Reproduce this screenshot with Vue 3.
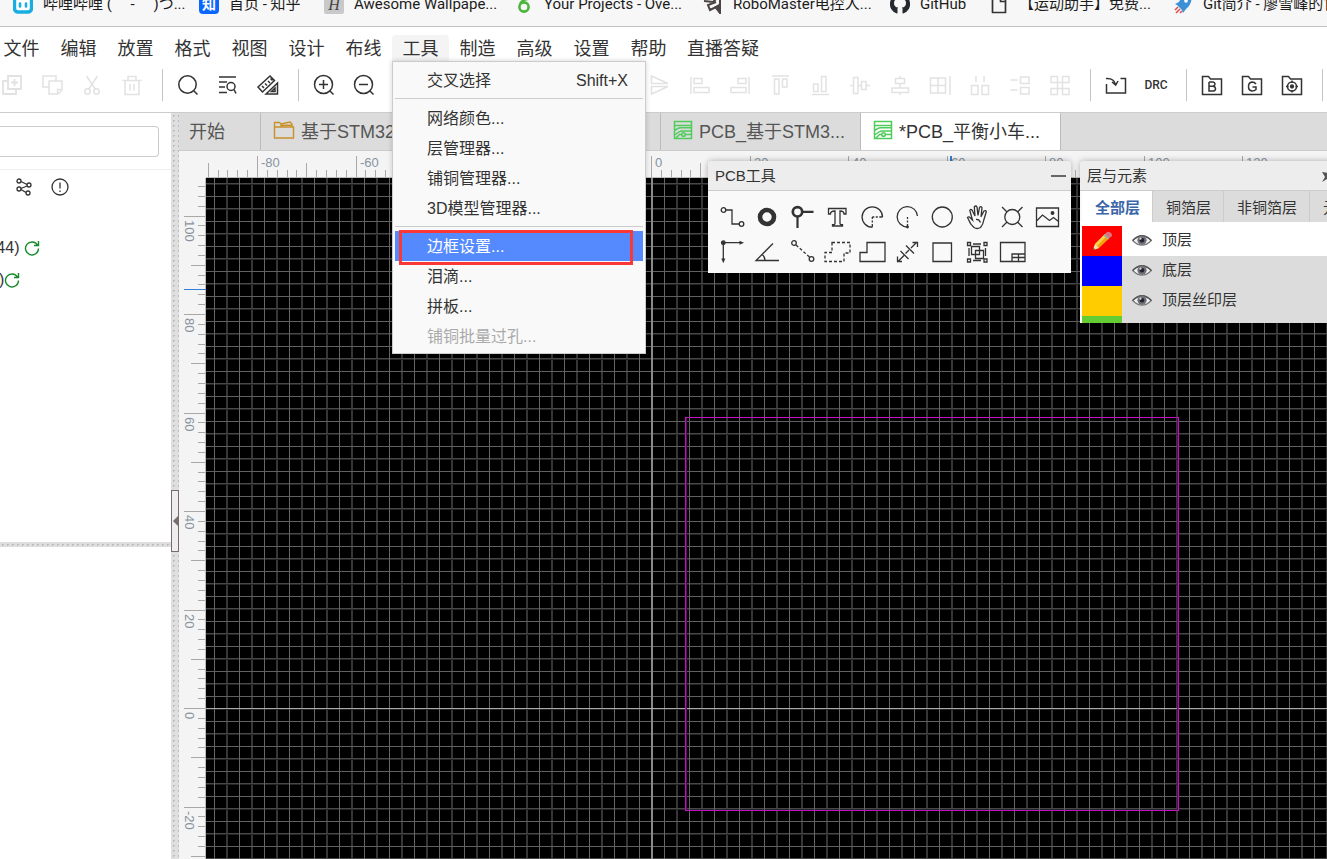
<script setup>
const bookmarks = [
  { text: '哔哩哔哩 ( ゜- ゜)つ...', icon: '<rect x="1.5" y="3" width="17" height="15" rx="3.5" fill="#fff" stroke="#19aee0" stroke-width="3.4"/><path d="M7 9.5v3M13 9.5v3" stroke="#19aee0" stroke-width="2.6" stroke-linecap="round"/>' },
  { text: '首页 - 知乎', icon: '<rect width="20" height="20" rx="4" fill="#0a66ff"/><text x="10" y="15" font-size="14" font-weight="700" text-anchor="middle" fill="#fff">知</text>' },
  { text: 'Awesome Wallpape...', icon: '<rect width="20" height="20" rx="2" fill="#c9c9c9"/><text x="10" y="16" font-size="16" font-style="italic" font-family="Liberation Serif" text-anchor="middle" fill="#444">H</text>' },
  { text: 'Your Projects - Ove...', icon: '<circle cx="10" cy="13" r="4.6" fill="none" stroke="#4cb53c" stroke-width="2.6"/><path d="M6 10Q9 5 14 5" fill="none" stroke="#4cb53c" stroke-width="2.4"/>' },
  { text: 'RoboMaster电控人...', icon: '<path d="M1 7l9 1 7-7v18l-4-6-6 3-2-5 8-3" fill="none" stroke="#4a4444" stroke-width="2"/><path d="M11 13l5-3v9z" fill="#4a4444"/>' },
  { text: 'GitHub', icon: '<path d="M10 0a10 10 0 0 0-3.2 19.5c.5.1.7-.2.7-.5v-3c-.3-1 0-1.8.7-2.4C5.5 13.3 4 12 4 9c0-1.2.4-2.2 1.1-2.9L5 3.3l3 1.2h4l3-1.2-.1 2.8C15.6 6.8 16 7.8 16 9c0 3-1.5 4.3-4.2 4.6.7.6 1 1.4.7 2.4v3c0 .3.2.6.7.5A10 10 0 0 0 10 0z" fill="#24292f"/>' },
  { text: '【运动助手】免费...', icon: '<path d="M3.5 1.5h9l4 4V18.5h-13zM11.5 1.5v6h5" fill="none" stroke="#333" stroke-width="1.7" stroke-linejoin="round"/>' },
  { text: 'Git简介 - 廖雪峰的官方网站', icon: '<path d="M19 0Q9 1 6 8L2 10l2 1 5 5 1 3 3-4Q19 11 19 0z" fill="#3d8fd6"/><circle cx="13" cy="7" r="1.8" fill="#fff"/><path d="M2 16l3-3M3 19l4-4M7 19l2-2" stroke="#e2474b" stroke-width="1.5"/>' }
]

const menus = ['文件', '编辑', '放置', '格式', '视图', '设计', '布线', '工具', '制造', '高级', '设置', '帮助', '直播答疑']

const folder = '<path d="M2.5 21.5V3.5h6l2 2.5h11v15.5z"/>'
const toolGroups = [
  { off: true, icons: [
    ['复制加', '<path d="M8 3h13v13H8zM8 8H3v13h13v-5M14.5 6v7M11 9.5h7" stroke-width="1.8"/>'],
    ['副本', '<path d="M16 8V3H3v11h6M9 8h13v9l-4 4H9zM17.5 21v-4.5H22"/>'],
    ['剪切', '<path d="M6.5 3l9 13.5M17.5 3l-9 13.5"/><circle cx="7.5" cy="18.5" r="2.7"/><circle cx="16.5" cy="18.5" r="2.7"/>'],
    ['删除', '<path d="M2.5 7.5h19M8 7V3.5h8V7M5 8v13.5h14V8M10 11v6.5M14 11v6.5"/>']
  ] },
  { icons: [
    ['搜索', '<circle cx="11.5" cy="11.5" r="8.7"/><path d="M18 18l3.5 3.5"/>'],
    ['查找', '<path d="M3 4h17M3 9h8M3 14h6M3 19.5h8"/><circle cx="15" cy="13.5" r="4"/><path d="M18 16.5l2 4"/>'],
    ['测量', '<path d="M2 14L14 3l4.5 4.5L6.5 19zM6 13l2 2M9 10.5l2 2M12 8l2 2M14.5 5.5l2 2"/><path d="M10 21L21.5 10v11zM15.5 18.5h3.5v-3.5z"/>']
  ] },
  { icons: [
    ['放大', '<circle cx="11.5" cy="11.5" r="9"/><path d="M18 18l3.5 3.5M11.5 7v9M7 11.5h9"/>'],
    ['缩小', '<circle cx="11.5" cy="11.5" r="9"/><path d="M18 18l3.5 3.5M7 11.5h9"/>']
  ] },
  { off: true, wide: true, icons: [
    ['翻转', '<path d="M3.5 3v7.5H20zM3.5 21v-7.5H20z"/>'],
    ['左对齐', '<path d="M3 4v17M6 5.5h8v5H6zM6 14.5h15v5H6z"/>'],
    ['右对齐', '<path d="M21 4v17M10 5.5h8v5h-8zM3 14.5h15v5H3z"/>'],
    ['顶对齐', '<path d="M4 3h17M6.5 6h4.5v15H6.5zM14.5 6h4.5v8h-4.5z"/>'],
    ['底对齐', '<path d="M4 21.5h17M5.5 11h4.5v7.5H5.5zM13.5 3.5H18v15h-4.5z"/>'],
    ['水平居中', '<path d="M2 12.5h3M10 12.5h3.5M18 12.5h4M5.5 4.5H10v16H5.5zM13.5 8.5H18v8h-4.5z"/>'],
    ['垂直居中', '<path d="M12 3v2.5M12 10.5V15M12 19.5V22M7.5 5.5h9v5h-9zM4 15h16.5v4.5H4z"/>'],
    ['网格对齐', '<path d="M22 3v19M2.5 5h15v15h-15zM10 5v15M2.5 12.5h15"/>'],
    ['水平分布', '<path d="M8 3v6M16 3v6M3.5 12.5h6.5v9H3.5zM14 12.5h6.5v9H14z"/>'],
    ['垂直分布', '<path d="M2.5 7h7M2.5 17h7M12.5 4H21v6.5h-8.5zM12.5 14.5H21V21h-8.5z"/>'],
    ['阵列', '<path d="M3 3.500h6.5v6H3zM14.500 3.500H21v6h-6.500zM3 15.500h6.500v6H3zM14.500 15.500H21v6h-6.500zM9.500 9.500v6M14.500 9.500v6M9.500 9.500h5M9.500 15.500h5"/>']
  ] },
  { icons: [
    ['导入', '<path d="M5 8.500M2.500 11v9h19V5.500h-5M2 5.500Q10 5 11.500 11.500M8 9l3.700 3 2.300-4"/>'],
    ['设计规则检查', '<text x="12" y="16" font-size="12" font-weight="500" text-anchor="middle" stroke="none" fill="#333" font-family="Roboto">DRC</text>']
  ] },
  { icons: [
    ['物料清单', folder + '<path d="M9 9h4q2 .3 2 2t-2 2.3H9M9 9v9h4.5q2-.3 2-2.300T13 13.300"/>'],
    ['制板文件', folder + '<path d="M16 11Q14.500 9 12 9q-3.500.5-3.500 4.500T12 18q2.500 0 4-1.500V14h-3.500"/>'],
    ['坐标', folder + '<circle cx="12" cy="13.5" r="4.5"/><circle cx="12" cy="13.5" r="1.4" fill="#333"/><path d="M12 7.500V10M12 17v2.500M6 13.500h2.500M15.500 13.500H18"/>']
  ] },
  { icons: [] }
]

const menuItems = [
  { text: '交叉选择', key: 'Shift+X' },
  { line: true },
  { text: '网络颜色...' },
  { text: '层管理器...' },
  { text: '铺铜管理器...' },
  { text: '3D模型管理器...' },
  { line: true },
  { text: '边框设置...', active: true },
  { text: '泪滴...' },
  { text: '拼板...' },
  { text: '铺铜批量过孔...', off: true }
]

const tabs = [
  { text: '开始', kind: 'home' },
  { text: '基于STM32...', kind: 'folder' },
  { text: '', kind: 'sheet' },
  { text: 'PCB_基于STM3...', kind: 'pcb' },
  { text: '*PCB_平衡小车...', kind: 'pcb', active: true }
]

const pcbTools = [
  ['导线', '<circle cx="6.5" cy="8" r="2.3"/><path d="M9 8h6v14h7"/><circle cx="24.5" cy="22" r="2.3"/>'],
  ['焊盘', '<circle cx="15" cy="15" r="7" stroke-width="4.6"/>'],
  ['过孔', '<circle cx="10.5" cy="9.8" r="4.7" stroke-width="2.7"/><path d="M15.500 9.800H26.500M10.500 15v11" stroke-width="2.2"/>'],
  ['文本', '<path d="M6.500 6.500h17.500v5.500h-2q0-3-4-3v12.500q0 1.200 2.500 1.200V24H10.500v-1.300q2.500 0 2.500-1.200V9q-4.500 0-4.500 3h-2z"/>'],
  ['圆弧', '<path d="M25.500 15A10.200 10.200 0 1 0 15.300 25.200M23 15h2.500M15.300 23v2.200"/><path d="M15.300 15v8M15.300 15H23" stroke-dasharray="2 1.5"/>'],
  ['中心圆弧', '<path d="M25.500 14A10.200 10.200 0 1 0 15.300 25"/><path d="M15.500 15v9" stroke-dasharray="2 1.5"/><circle cx="15.5" cy="25" r=".8"/>'],
  ['圆', '<circle cx="15.3" cy="15" r="10"/>'],
  ['拖动', '<path d="M12 25.500Q8 22 7 18.500L5.500 15.500q1.500-1.500 3 .5l2 2L7.800 8.500q.7-2 2.300-.3L13 14 12.300 5q1.500-2 2.700 0l1 8.500 1.500-8q1.700-1.700 2.500.3l-1 9 3-5.800q1.800-1.200 2.300.7L21.800 18q-.6 4.500-3.300 7.500Q15 27.500 12 25.500z"/><path d="M14 17.500q3-.5 4.500 3"/>'],
  ['孔', '<circle cx="15.3" cy="15" r="7.5"/><path d="M5 5l5 5M25.500 5l-5 5M5 25l5-5M25.500 25l-5-5"/>'],
  ['图片', '<path d="M4.500 6h22v18.500h-22zM4.500 19l6-6 7 5.500 4-3 5 4"/><circle cx="20.5" cy="11" r="1.3" fill="#333"/>'],
  ['原点', '<path d="M6.300 5.700H24M6.300 5.700V23"/><circle cx="6.3" cy="5.7" r="1.800" fill="#333"/><path d="M22.500 3.700l4.500 2-4.500 2zM4.300 21.500l2 4.800 2-4.800z" fill="#333" stroke="none"/>'],
  ['角度', '<path d="M21 6.500L4 23.500h23M10 17.500q3 2 3 6"/>'],
  ['连线', '<circle cx="7" cy="6" r="2.3"/><circle cx="24.5" cy="22" r="2.3"/><path d="M9 8l13.500 12" stroke-dasharray="3 2"/>'],
  ['铺铜', '<path d="M10 5.500h18V16h-6v8.500H3v-9h7z" stroke-dasharray="3 2"/>'],
  ['实心填充', '<path d="M10 5.500h18v19H3v-9h7z"/>'],
  ['尺寸', '<path d="M6 24.500l6-6M19 11l6-6M20.500 5.500h5V10M5.500 19.500v5H10M8.500 14l8 8M14 8.500l8 8M13.500 16.500l3.500-3.500"/>'],
  ['矩形', '<path d="M6 6h18.500v18.500H6z"/>'],
  ['组合', '<path d="M5.500 5.500h3v3h-3zM22 5.500h3v3h-3zM5.500 22h3v3h-3zM22 22h3v3h-3zM9.500 9.500h8v8h-8zM13.500 13.500h8v8h-8zM11 7h8M11 23.500h8M7 11v8M23.500 11v8"/>'],
  ['面板', '<path d="M3.500 5.500h24.500v19H3.500zM15 24.500V17h13M15 20.500h13M21.500 17v7.500"/>']
]

const layerTabs = ['全部层', '铜箔层', '非铜箔层', '元素']
const layers = [
  { name: '顶层', cls: 'red', active: true },
  { name: '底层', cls: 'blue' },
  { name: '顶层丝印层', cls: 'yellow' },
  { name: '', cls: 'green' }
]

const STEP = 9.85
function ticks(origin, from, to, dir) {
  const list = []
  for (let i = from; i <= to; i++) {
    const major = i % 10 === 0
    list.push({
      pos: Math.round(origin + i * STEP),
      size: major ? 21 : i % 5 === 0 ? 14 : 7,
      label: major ? String(i * 2 * dir) : ''
    })
  }
  return list
}
const hTicks = ticks(446, -45, 160, 1)
const vTicks = ticks(530, -53, 90, -1)
</script>

<template>
  <div class="app">
    <nav class="bookmarks">
      <a v-for="b in bookmarks" :key="b.text" href="#" class="bookmark">
        <svg class="fav" viewBox="0 0 20 20" v-html="b.icon"></svg><span>{{ b.text }}</span>
      </a>
    </nav>

    <header class="top">
      <div class="menubar">
        <div v-for="m in menus" :key="m" class="menu-slot">
          <button class="menu" :class="{ open: m === '工具' }">{{ m }}</button>
          <div v-if="m === '工具'" class="dropdown">
            <template v-for="(it, i) in menuItems" :key="i">
              <hr v-if="it.line" class="rule" />
              <button v-else class="item" :class="{ active: it.active }" :disabled="it.off">
                <span>{{ it.text }}</span><span v-if="it.key">{{ it.key }}</span>
                <span v-if="it.active" class="marker"></span>
              </button>
            </template>
          </div>
        </div>
      </div>
      <div class="toolbar">
        <div v-for="(g, i) in toolGroups" :key="i" class="group" :class="{ off: g.off, wide: g.wide }">
          <button v-for="t in g.icons" :key="t[0]" class="tool" :aria-label="t[0]" :disabled="g.off">
            <svg viewBox="0 0 24 24" v-html="t[1]"></svg>
          </button>
        </div>
      </div>
    </header>

    <div class="body">
      <aside class="side">
        <div class="search"><input type="text" aria-label="搜索" /></div>
        <div class="side-tools">
          <button aria-label="网络"><svg viewBox="0 0 20 20"><circle cx="5" cy="4" r="2" /><circle cx="15" cy="8" r="2" /><circle cx="5" cy="12" r="2" /><circle cx="14" cy="16" r="2" /><path d="M7 4.500l6 3M13 9l-6 2.500M7 12.500l5 3" /></svg></button>
          <button aria-label="提示"><svg viewBox="0 0 20 20"><circle cx="10" cy="10" r="8" /><path d="M10 5.500v6M10 13.500v1.500" /></svg></button>
        </div>
        <div class="tree">
          <div class="node"><span>(44)</span><svg viewBox="0 0 16 16"><path d="M13.500 5A6.500 6.500 0 1 0 14.500 8.500M14.500 1v4.500H10" /></svg></div>
          <div class="node second"><span>)</span><svg viewBox="0 0 16 16"><path d="M13.500 5A6.500 6.500 0 1 0 14.500 8.500M14.500 1v4.500H10" /></svg></div>
        </div>
        <div class="hsplit"></div>
        <div class="side-bottom"></div>
      </aside>

      <div class="vsplit"><button class="collapse" aria-label="收起"></button></div>

      <main class="main">
        <div class="tabs">
          <button v-for="(t, i) in tabs" :key="i" class="tab" :class="[t.kind, { active: t.active }]">
            <svg v-if="t.kind === 'folder'" class="fold" viewBox="0 0 22 20"><path d="M1.500 18V2.500h5l1.500 1.500 9-2 2 2v3M1.500 7h19v11h-19zM8 4v1.500l11-.5" /></svg>
            <svg v-if="t.kind === 'pcb'" class="board" viewBox="0 0 20 20"><path d="M1.500 1.500h17v17h-17zM1.500 5.500h17M1.500 10.500l3-1.800q1.500-1 3-1h11M1.500 15l4.500-3q1.500-1 3-1h9.500M12 14.500h6.500M3 18l3.500-3.500h2" /><circle cx="10.500" cy="14.500" r="1.800" /></svg>
            <span>{{ t.text }}</span>
          </button>
        </div>

        <div class="workspace">
          <div class="corner"></div>
          <svg class="hruler">
            <g v-for="t in hTicks" :key="t.pos">
              <rect :x="t.pos - 1" :y="26 - t.size" width="1" :height="t.size" class="tick" />
              <text v-if="t.label" :x="t.pos + 3" y="16">{{ t.label }}</text>
            </g>
            <rect x="0" y="26" width="100%" height="1" class="edge" />
            <rect x="744" y="5" width="2" height="22" class="cursor" />
          </svg>
          <svg class="vruler">
            <g v-for="t in vTicks" :key="t.pos">
              <rect :x="26 - t.size" :y="t.pos" :width="t.size" height="1" class="tick" />
              <text v-if="t.label" :transform="`translate(6 ${t.pos + 4}) rotate(90)`">{{ t.label }}</text>
            </g>
            <rect x="26" y="0" width="1" height="100%" class="edge" />
            <rect x="5" y="111" width="22" height="1" class="cursor" />
          </svg>
          <svg class="canvas">
            <defs>
              <pattern id="grid" width="25" height="25" patternUnits="userSpaceOnUse">
                <rect x="20" width="2" height="25" fill="#363636" />
                <rect y="5" width="25" height="1" fill="#484848" />
                <rect y="6" width="25" height="1" fill="#242424" />
                <rect x="8" width="1" height="25" fill="#666" />
                <rect y="18" width="25" height="1" fill="#606060" />
              </pattern>
            </defs>
            <rect width="100%" height="100%" fill="#000" />
            <rect width="100%" height="100%" fill="url(#grid)" />
            <rect x="445" width="2" height="100%" fill="#8a8a8a" />
            <rect y="530" width="100%" height="1" fill="#aaa" />
            <path d="M480.5 239v394M971.5 239v394" stroke="#600860" />
            <rect x="479.5" y="239.5" width="493" height="393" class="outline" />
          </svg>
        </div>

        <section class="panel pcb-panel">
          <div class="panel-head"><span>PCB工具</span><button class="minimize" aria-label="最小化"></button></div>
          <div class="pcb-grid">
            <button v-for="t in pcbTools" :key="t[0]" :aria-label="t[0]"><svg viewBox="0 0 30 30" v-html="t[1]"></svg></button>
          </div>
        </section>

        <section class="panel layer-panel">
          <div class="panel-head">
            <span>层与元素</span>
            <button class="pin" aria-label="固定"><svg viewBox="0 0 14 14"><path d="M1 3l6 1 4-3 2 5-3 3 0 4-4-3-5 3 3-5z" /></svg></button>
          </div>
          <div class="layer-tabs">
            <button v-for="(t, i) in layerTabs" :key="t" :class="{ active: i === 0 }">{{ t }}</button>
          </div>
          <div class="layer-list">
            <div v-for="l in layers" :key="l.cls" class="layer" :class="{ active: l.active, cut: !l.name }">
              <button class="swatch" :class="l.cls" :aria-label="l.name || '底层丝印层'">
                <svg v-if="l.active" viewBox="0 0 20 20"><path d="M1 19l2-6L13 3l4.500 4L7 17z" fill="#f5a50c" /><path d="M3 13L13 3l2 1.800L5 15z" fill="#ffd24a" /><path d="M1 19l2-6 4 4z" fill="#f6deb0" /><path d="M1 19l.7-2 1.300 1.300z" fill="#222" /><path d="M11.500 4.500L13 3l4.500 4L16 8.700z" fill="#9aa" /><path d="M13 3l2-2q2-1 4 1t.5 3.500l-2 1.500z" fill="#e0707a" /></svg>
              </button>
              <svg v-if="l.name" class="eye" viewBox="0 0 20 14"><path d="M.7 6.500Q10-3 19.300 6.500 10 16 .7 6.500z" fill="#f1f1f1" stroke="#777" stroke-width="1.2" /><path d="M.7 6.500Q10-3 19.300 6.500" fill="none" stroke="#555" stroke-width="1.5" /><circle cx="10" cy="6.3" r="4.6" fill="#707078" /><circle cx="10" cy="6.3" r="2.3" fill="#222233" /><circle cx="8.5" cy="4.7" r="1.1" fill="#ddd" /></svg>
              <span>{{ l.name }}</span>
            </div>
          </div>
        </section>
      </main>
    </div>
  </div>
</template>

<style>
html, body { margin: 0; overflow: hidden; }
</style>

<style scoped>
.app {
  display: flex;
  flex-direction: column;
  height: 100vh;
  overflow: hidden;
  background: #fff;
  color: #333;
  font-family: "Liberation Sans", "Noto Sans CJK SC", sans-serif;
  font-size: 16px;
}
button {
  border: 0;
  padding: 0;
  margin: 0;
  background: none;
  color: inherit;
  font: inherit;
}
svg { display: block; flex: none; }

.bookmarks {
  display: grid;
  grid-template-columns: 186px 125px 190px 189px 187px 99px 184px 1fr;
  align-content: end;
  height: 26px;
  flex: none;
  padding-left: 13px;
  overflow: hidden;
  background: #f7f7f7;
  border-bottom: 1px solid #c2c2c2;
  font-family: Roboto, "Noto Sans CJK SC", sans-serif;
  font-size: 15px;
}
.bookmark {
  display: flex;
  align-items: center;
  gap: 10px;
  height: 24px;
  margin-bottom: 10px;
  line-height: 24px;
  color: #1c1c1c;
  text-decoration: none;
  white-space: nowrap;
}
.fav { width: 20px; height: 20px; }

.top { flex: none; border-bottom: 1px solid #ccc; }
.menubar { display: flex; padding-top: 8px; margin-left: -7px; }
.menu-slot { position: relative; }
.menu {
  display: block;
  min-width: 57px;
  height: 26px;
  padding: 0 10px;
  border-radius: 4px 4px 0 0;
  font-size: 18px;
  line-height: 28px;
  white-space: nowrap;
}
.menu.open { background: #f4f4f4; }
.dropdown {
  position: absolute;
  z-index: 20;
  top: 26px;
  left: 0;
  box-sizing: border-box;
  width: 254px;
  padding: 3px 2px 2px;
  background: #f9f9f9;
  border: 1px solid #ccc;
  box-shadow: 0 0 5px rgba(0, 0, 0, 0.18);
}
.rule { height: 1px; margin: 3px 0 4px; border: 0; background: #ccc; }
.item {
  position: relative;
  display: flex;
  justify-content: space-between;
  width: 100%;
  height: 30px;
  padding: 0 15px 0 32px;
  line-height: 32px;
  white-space: nowrap;
}
.item.active { background: #558aff; color: #fff; }
.item:disabled { color: #aaa; }
.marker {
  position: absolute;
  z-index: 1;
  top: -1px;
  left: 4px;
  right: 10px;
  height: 29px;
  border: 3px solid #fb3838;
}

.toolbar {
  display: flex;
  align-items: center;
  box-sizing: border-box;
  height: 51px;
  margin-left: -8px;
  padding-bottom: 4px;
}
.group { display: flex; align-items: center; flex: none; }
.group + .group::before {
  content: "";
  width: 1px;
  height: 32px;
  margin: 0 5px 0 10px;
  background: #c4c4c4;
}
.group.wide::before { margin-right: 245px; }
.tool { display: grid; place-items: center; width: 40px; height: 32px; }
.tool svg {
  width: 24px;
  height: 24px;
  fill: none;
  stroke: #333;
  stroke-width: 1.5;
}
.off .tool svg { stroke: #e2e2e2; }

.body { display: flex; flex: 1; min-height: 0; }
.side { display: flex; flex-direction: column; width: 171px; flex: none; overflow: hidden; }
.search { padding: 13px 12px 12px 0; border-bottom: 1px solid #eee; }
.search input {
  display: block;
  box-sizing: border-box;
  width: 100%;
  height: 31px;
  border: 1px solid #ccc;
  border-left: 0;
  border-radius: 0 4px 4px 0;
  background: #fff;
}
.side-tools { display: flex; gap: 16px; padding: 7px 0 0 14px; }
.side-tools svg { width: 20px; height: 20px; fill: none; stroke: #333; stroke-width: 1.3; }
.tree { box-sizing: border-box; height: 345px; flex: none; padding-top: 35px; }
.node { display: flex; align-items: center; gap: 5px; height: 32px; margin-left: -9px; }
.node.second { gap: 0; margin-left: -1px; }
.node svg { width: 16px; height: 16px; fill: none; stroke: #168a2b; stroke-width: 1.4; }
.hsplit {
  height: 5px;
  flex: none;
  background: #dedede radial-gradient(circle, #bbb 1px, transparent 1px) 0 0 / 5px 5px;
}
.side-bottom { flex: 1; }

.vsplit {
  display: flex;
  flex-direction: column;
  box-sizing: border-box;
  width: 8px;
  flex: none;
  padding-top: 377px;
  background: #dfdfdf radial-gradient(circle, #bcbcbc 1px, transparent 1px) 0 0 / 5px 5px;
}
.collapse {
  display: grid;
  place-items: center;
  height: 62px;
  border: 1px solid #776c6c;
  background: #eee;
}
.collapse::before {
  content: "";
  border: 5px solid transparent;
  border-right-color: #776c6c;
  border-left-width: 0;
}

.main { position: relative; display: flex; flex-direction: column; flex: 1; min-width: 0; overflow: hidden; }
.tabs { display: flex; height: 37px; flex: none; background: #dcdcdc; border-bottom: 1px solid #ccc; }
.tab {
  display: flex;
  align-items: center;
  box-sizing: border-box;
  width: 200px;
  padding: 0 10px 4px 12px;
  border-right: 1px solid #bbb;
  color: #555;
  font-size: 18px;
  white-space: nowrap;
}
.tab.home { width: 82px; padding-left: 10px; }
.tab.active { background: #fff; color: #333; }
.tab svg { fill: none; }
.fold { width: 22px; height: 20px; margin-right: 6px; stroke: #c8912b; stroke-width: 1.4; }
.board { width: 20px; height: 20px; margin-right: 6px; stroke: #4fcb5c; stroke-width: 1.5; }

.workspace {
  display: grid;
  grid-template-columns: 27px 1fr;
  grid-template-rows: 27px 1fr;
  flex: 1;
  min-height: 0;
  background: #f4f4f4;
}
.hruler, .vruler, .canvas { width: 100%; height: 100%; min-height: 0; overflow: hidden; }
.workspace text { font-size: 13px; fill: #8793a0; }
.tick { fill: #a8a8a8; }
.edge { fill: #bbb; }
.cursor { fill: #2f7fd8; }
.outline { fill: none; stroke: #c010c0; stroke-width: 1; }

.panel {
  position: absolute;
  z-index: 5;
  top: 48px;
  background: #f9f9f9;
  border-radius: 4px 4px 0 0;
  box-shadow: 0 0 6px rgba(0, 0, 0, 0.3);
  overflow: hidden;
  font-size: 15px;
}
.panel-head {
  display: flex;
  align-items: center;
  justify-content: space-between;
  height: 29px;
  padding: 0 5px 0 7px;
  background: #ededed;
  border-bottom: 1px solid #ccc;
  line-height: 28px;
}
.pcb-panel { left: 529px; width: 363px; }
.minimize { width: 15px; height: 2px; background: #666; }
.pcb-grid { display: grid; grid-template-columns: repeat(10, 35px); padding: 8px 6px 4px; }
.pcb-grid button { display: grid; place-items: center; height: 35px; }
.pcb-grid svg { width: 30px; height: 30px; fill: none; stroke: #333; stroke-width: 1.3; }

.layer-panel { left: 901px; width: 360px; }
.layer-panel .panel-head { padding-right: 105px; }
.pin svg { width: 14px; height: 14px; fill: #555; }
.layer-tabs { display: flex; height: 31px; margin-left: 2px; background: #dcdcdc; }
.layer-tabs button { padding: 0 12px 0 13px; border-right: 1px solid #ccc; white-space: nowrap; }
.layer-tabs .active { background: #fff; color: #3a65a8; font-weight: 700; }
.layer-list { padding: 4px 0 0 2px; background: #fff; }
.layer { display: flex; align-items: center; height: 30px; line-height: 28px; background: #dcdcdc; }
.layer span { height: 30px; }
.layer.active { background: #fff; }
.layer.cut { height: 7px; }
.swatch { display: grid; place-items: center; width: 40px; height: 100%; margin-right: 10px; }
.swatch svg { width: 20px; height: 20px; }
.red { background: #f00; }
.blue { background: #00f; }
.yellow { background: #fc0; }
.green { background: #6c3; }
.eye { width: 20px; height: 14px; margin-right: 10px; }
</style>
